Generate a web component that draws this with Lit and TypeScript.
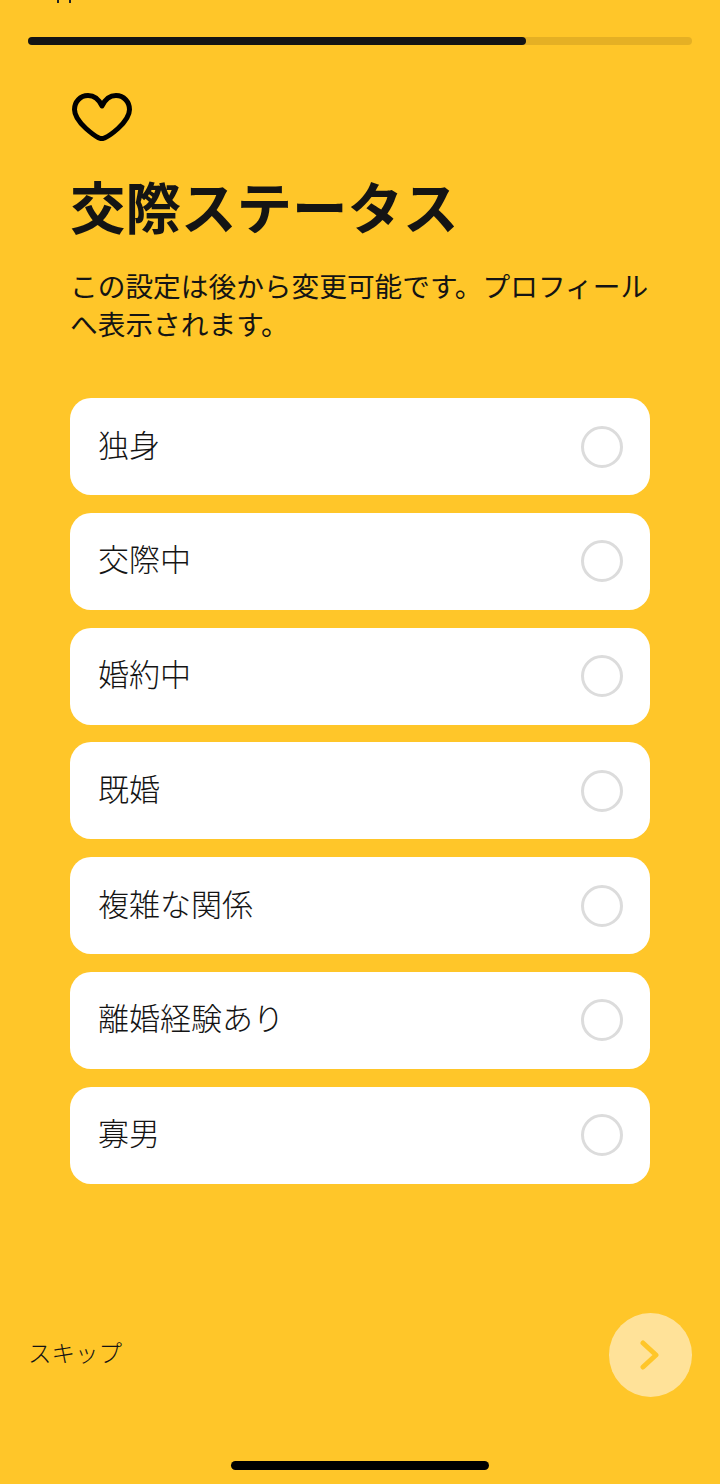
import { LitElement, html, css } from "lit";
import { customElement, property } from "lit/decorators.js";

const OPTIONS = ["独身", "交際中", "婚約中", "既婚", "複雑な関係", "離婚経験あり", "寡男"];

@customElement("app-root")
export class AppRoot extends LitElement {
  @property({ type: Number })
  progress = 75;

  protected render() {
    return html`
      <div class="screen">
        <div class="status"><span class="tick"></span><span class="tick"></span></div>
        <div class="track">
          <div class="fill" style="width: ${this.progress}%"></div>
        </div>

        <div class="content">
          <svg class="heart" viewBox="0 0 60 48" fill="none" stroke="#000" stroke-width="5" stroke-linejoin="round">
            <path
              d="M30 13C27 6.5 22 2.5 16 2.5 8 2.5 2.5 9 2.5 16.5 2.5 24 8 30 14 35.5 18.5 39.5 23 43 26.5 44.8 28.5 45.8 31 45.8 33 44.8 37 43 41.5 39.5 46 35.5 52 30 57.5 24 57.5 16.5 57.5 9 52 2.5 44 2.5 38 2.5 33 6.5 30 13Z"
            />
          </svg>
          <h1>交際ステータス</h1>
          <p class="sub">この設定は後から変更可能です。プロフィールへ表示されます。</p>

          <div class="options">
            ${OPTIONS.map(
              (o) => html`
                <div class="option">
                  <span class="label">${o}</span>
                  <div class="radio"></div>
                </div>
              `,
            )}
          </div>
        </div>

        <div class="footer">
          <span class="skip">スキップ</span>
          <div class="next">
            <svg viewBox="0 0 20 30" width="20" height="30" fill="none" stroke="#ffc629" stroke-width="5" stroke-linecap="round" stroke-linejoin="round">
              <path d="M3 3l13 12L3 27" />
            </svg>
          </div>
        </div>

        <div class="home-wrap"><div class="home"></div></div>
      </div>
    `;
  }

  static styles = css`
    :host {
      display: block;
    }

    .screen {
      box-sizing: border-box;
      width: 720px;
      height: 1484px;
      overflow: hidden;
      display: flex;
      flex-direction: column;
      background: #ffc629;
      color: #141414;
      font-family: "Noto Sans CJK JP", "Noto Sans", sans-serif;
    }

    .status {
      height: 4px;
      display: flex;
      gap: 10px;
      padding-left: 57px;
    }

    .tick {
      width: 2px;
      height: 3px;
      background: #222;
    }

    .track {
      height: 8px;
      margin: 33px 28px 0;
      border-radius: 4px;
      background: #e5b024;
    }

    .fill {
      height: 100%;
      border-radius: 4px;
      background: #141414;
    }

    .content {
      display: flex;
      flex-direction: column;
      padding: 48px 70px 0;
    }

    .heart {
      width: 60px;
      height: 48px;
      margin-left: 2px;
    }

    h1 {
      margin: 24px 0 0 0;
      font-size: 55.5px;
      line-height: 80px;
      font-weight: 700;
    }

    .sub {
      margin: 21px -10px 0 0;
      font-size: 27.7px;
      line-height: 38px;
      font-weight: 400;
    }

    .options {
      display: flex;
      flex-direction: column;
      gap: 17.8px;
      margin-top: 56px;
    }

    .option {
      box-sizing: border-box;
      height: 97px;
      display: flex;
      align-items: center;
      justify-content: space-between;
      padding: 0 27px 0 28px;
      border-radius: 21px;
      background: #fff;
      font-size: 31px;
      font-weight: 300;
    }

    .label {
      padding-bottom: 7px;
    }

    .radio {
      box-sizing: border-box;
      width: 42px;
      height: 42px;
      border: 3px solid #dcdcdc;
      border-radius: 50%;
    }

    .footer {
      display: flex;
      align-items: center;
      justify-content: space-between;
      margin-top: 129.2px;
      padding: 0 28px;
    }

    .skip {
      font-size: 23.5px;
      font-weight: 300;
      padding-bottom: 5px;
    }

    .next {
      width: 83.4px;
      height: 84px;
      display: flex;
      align-items: center;
      justify-content: center;
      border-radius: 50%;
      background: #ffe299;
    }

    .home-wrap {
      display: flex;
      justify-content: center;
      margin-top: 64px;
    }

    .home {
      width: 258px;
      height: 9px;
      border-radius: 5px;
      background: #000;
    }
  `;
}
